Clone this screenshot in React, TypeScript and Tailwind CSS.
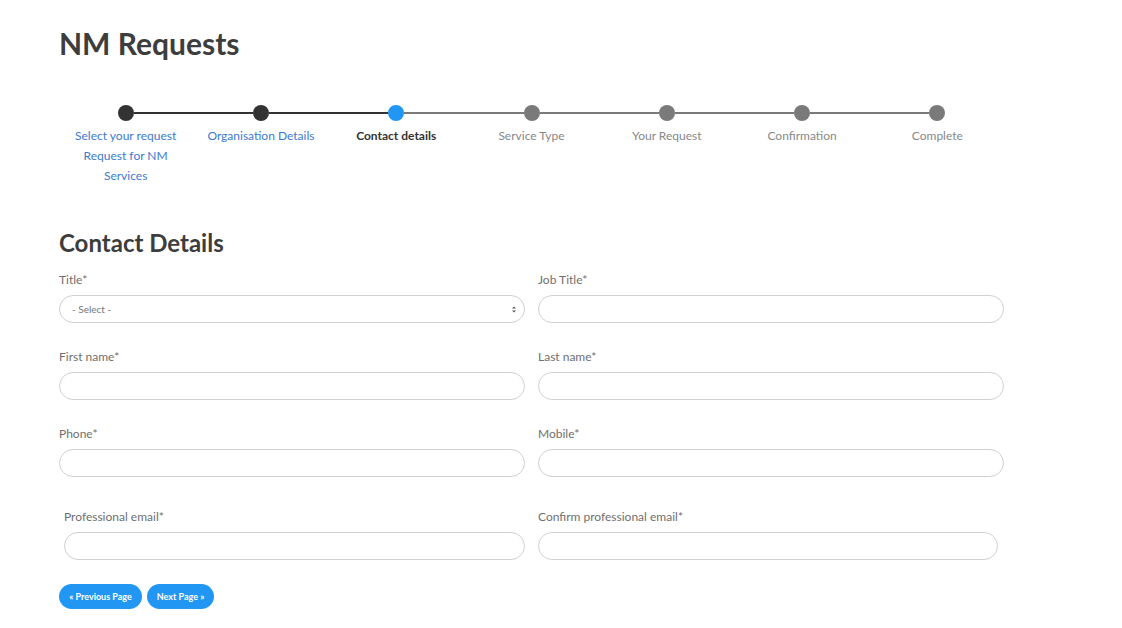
const steps = [
  { label: ['Select your request', 'Request for NM', 'Services'] },
  { label: ['Organisation Details'] },
  { label: ['Contact details'] },
  { label: ['Service Type'] },
  { label: ['Your Request'] },
  { label: ['Confirmation'] },
  { label: ['Complete'] },
];

const current = 2;

function Stepper() {
  return (
    <div className="ml-[-1px] grid w-[947px] grid-cols-7">
      {steps.map((s, i) => {
        const leftColor = i === 0 ? 'bg-transparent' : i <= current ? 'bg-[#333333]' : 'bg-[#7a7a7a]';
        const rightColor = i === steps.length - 1 ? 'bg-transparent' : i < current ? 'bg-[#333333]' : 'bg-[#7a7a7a]';
        const dotColor = i < current ? 'bg-[#333333]' : i === current ? 'bg-[#2196f3]' : 'bg-[#7a7a7a]';
        const textColor =
          i < current ? 'text-[#3d7ad0]' : i === current ? 'font-bold text-[#333333]' : 'text-[#888888]';
        return (
          <div key={i} className="flex flex-col items-center">
            <div className="flex h-4 w-full items-center">
              <div className={`h-[2px] flex-1 ${leftColor}`} />
              <div className={`h-4 w-4 shrink-0 rounded-full ${dotColor}`} />
              <div className={`h-[2px] flex-1 ${rightColor}`} />
            </div>
            <div className={`mt-[5px] text-center text-[12px] leading-[20px] ${textColor}`}>
              {s.label.map((l) => (
                <div key={l}>{l}</div>
              ))}
            </div>
          </div>
        );
      })}
    </div>
  );
}

function Field({ label, select, className = '' }: { label: string; select?: boolean; className?: string }) {
  return (
    <div className={className}>
      <div className="text-[12px] leading-4 text-[#6f6f6f]">{label}*</div>
      {select ? (
        <div className="mt-[7px] flex h-7 items-center justify-between rounded-full border border-[#d0d0d0] bg-white pl-[12px] pr-[7px]">
          <span className="text-[10px] text-[#777777]">- Select -</span>
          <svg width="6" height="9" viewBox="0 0 6 9">
            <path d="M1 3.5 L3 1.5 L5 3.5 Z" fill="#555" />
            <path d="M1 5.5 L3 7.5 L5 5.5 Z" fill="#555" />
          </svg>
        </div>
      ) : (
        <div className="mt-[7px] h-7 rounded-full border border-[#d0d0d0] bg-white" />
      )}
    </div>
  );
}

export default function App() {
  return (
    <div className="min-h-[628px] bg-white px-[59px] pt-[23px] font-['Lato',sans-serif] text-[#3d3d3d]">
      <h1 className="text-[30px] font-bold leading-[40px] text-[#3d3d3d]">NM Requests</h1>

      <div className="mt-[42px]">
        <Stepper />
      </div>

      <h2 className="mt-[42px] text-[24px] font-bold leading-[30px] text-[#3d3d3d]">Contact Details</h2>

      <div className="mt-[14px] grid w-[945px] grid-cols-2 gap-x-[13px]">
        <Field label="Title" select />
        <Field label="Job Title" />
        <Field label="First name" className="mt-[26px]" />
        <Field label="Last name" className="mt-[26px]" />
        <Field label="Phone" className="mt-[26px]" />
        <Field label="Mobile" className="mt-[26px]" />
        <Field label="Professional email" className="mt-[32px] pl-[5px]" />
        <Field label="Confirm professional email" className="mt-[32px] pr-[6px]" />
      </div>

      <div className="mt-[24px] flex gap-[5px]">
        <button className="h-[25px] w-[83px] rounded-full bg-[#2196f3] text-[9px] font-bold text-white">
          « Previous Page
        </button>
        <button className="h-[25px] w-[67px] rounded-full bg-[#2196f3] text-[9px] font-bold text-white">
          Next Page »
        </button>
      </div>
    </div>
  );
}
